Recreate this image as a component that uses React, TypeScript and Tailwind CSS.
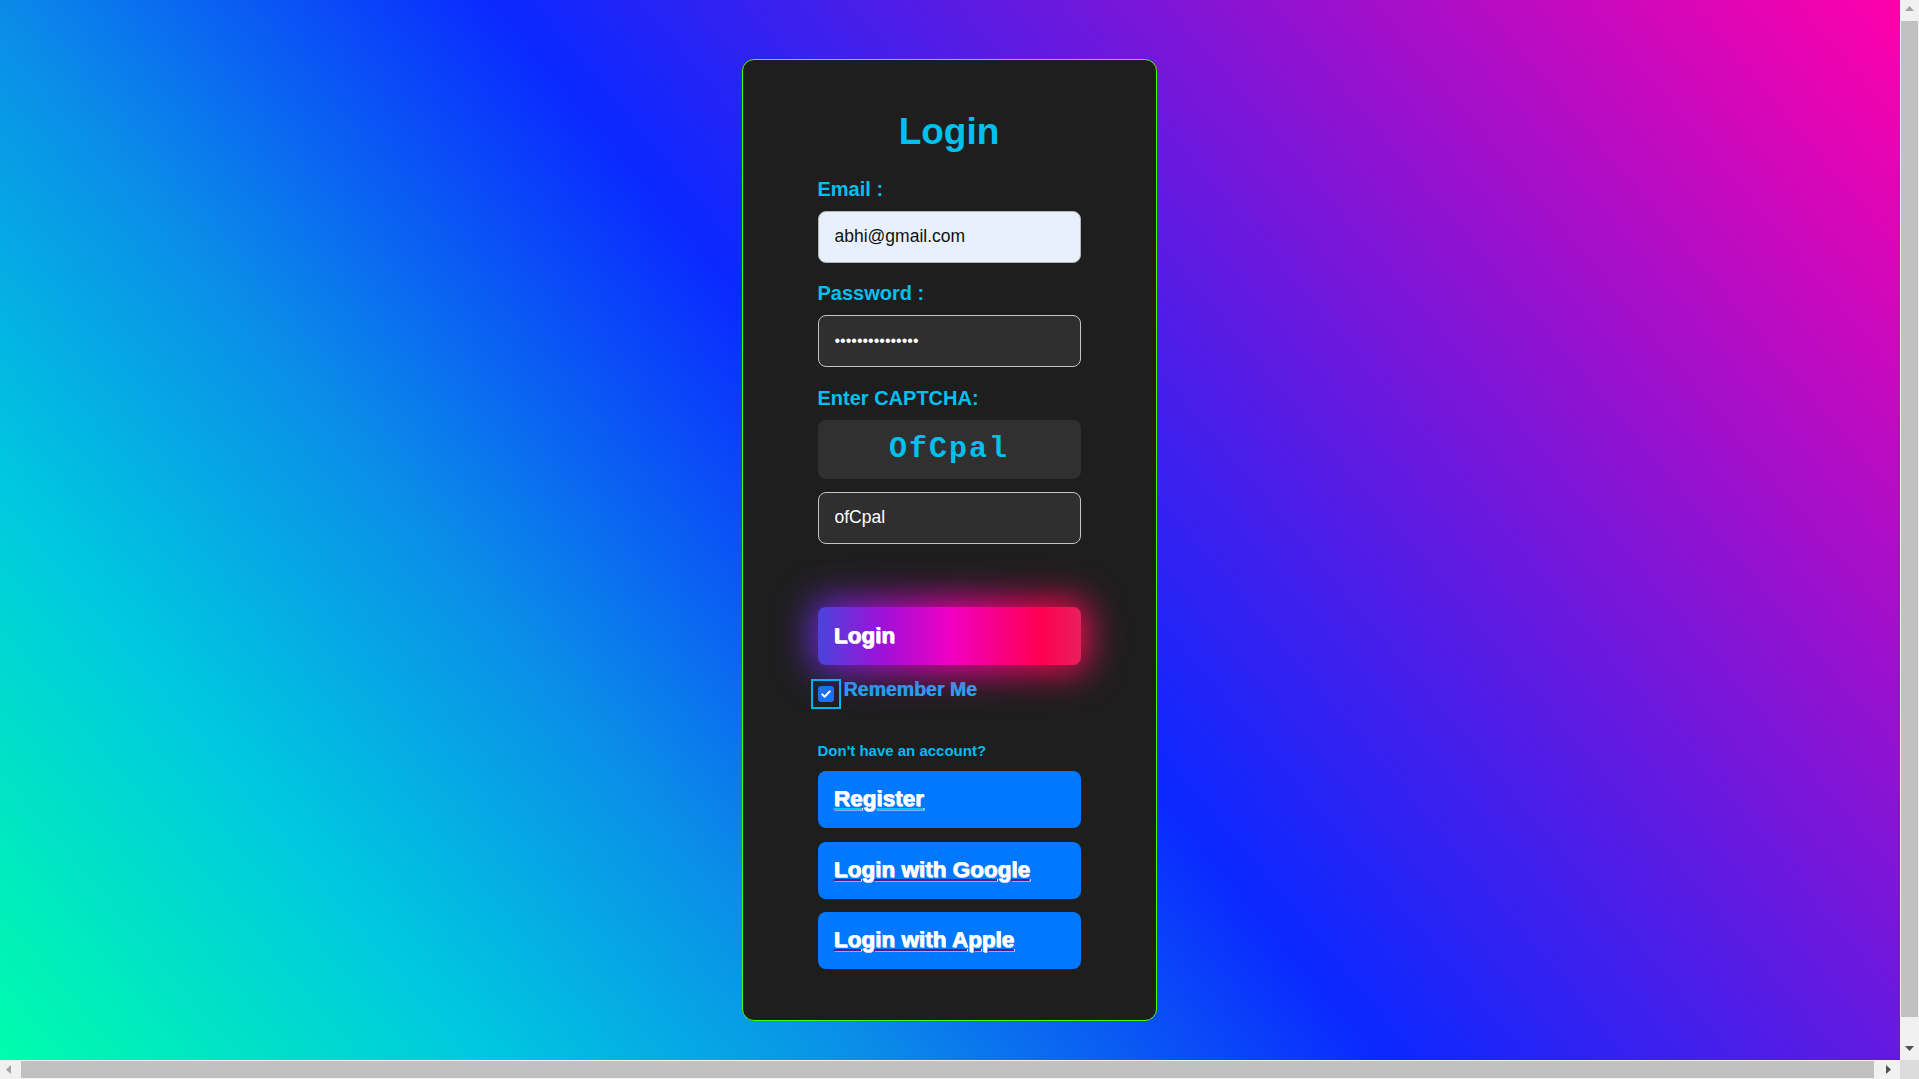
import React from "react";

const sans = "font-['Liberation_Sans',Arial,sans-serif]";

interface LinkButtonProps {
  label: string;
  line: string;
  top: string;
}

const LinkButton = ({ label, line, top }: LinkButtonProps) => {
  return (
    <button
      className={`${top} h-[57px] w-full shrink-0 rounded-lg bg-[#0078ff] pl-4 text-left text-[22.5px] font-bold text-white`}
    >
      <span
        className={`underline decoration-2 underline-offset-[2px] ${line} [text-shadow:0.8px_0_0_#fff,1px_0.6px_0_#d8d2ff]`}
      >
        {label}
      </span>
    </button>
  );
};

// small triangles for the scrollbar arrows
const Arrow = ({ dir, color }: { dir: "up" | "down" | "left" | "right"; color: string }) => {
  const pts = {
    up: "0,5 4.5,0 9,5",
    down: "0,0 9,0 4.5,5",
    left: "5,0 5,9 0,4.5",
    right: "0,0 0,9 5,4.5",
  }[dir];
  const vertical = dir === "up" || dir === "down";
  return (
    <svg
      width={vertical ? 9 : 5}
      height={vertical ? 5 : 9}
      viewBox={vertical ? "0 0 9 5" : "0 0 5 9"}
    >
      <polygon points={pts} fill={color} />
    </svg>
  );
};

const App = () => {
  return (
    <div
      className={`grid h-screen w-screen grid-cols-[1fr_19px] grid-rows-[1fr_19px] overflow-hidden ${sans}`}
    >
      <main className="overflow-hidden">
        <div className="flex h-[1079px] w-full items-center justify-center pr-[2px] bg-[linear-gradient(50deg,#00ffaa_0%,#00c8e0_18%,#0a8ce8_32%,#0a28ff_50%,#ff00aa_100%)]">
          <div className="flex w-[415px] flex-col rounded-xl border border-[#44ff00] bg-[#1e1e1e] px-[75px] pt-[50px] pb-[51px]">
            <h1 className="text-center text-[37px] leading-[44px] font-bold text-[#00c0f0]">
              Login
            </h1>

            <label className="mt-[23px] text-[20px] leading-[24px] font-bold text-[#00c0f0]">
              Email :
            </label>
            <input
              readOnly
              defaultValue="abhi@gmail.com"
              className="mt-[10px] h-[52px] w-full rounded-lg border border-[#b4b4b4] bg-[#e8f0fe] px-4 text-[17.5px] text-[#111] outline-none"
            />

            <label className="mt-[18px] text-[20px] leading-[24px] font-bold text-[#00c0f0]">
              Password :
            </label>
            <input
              readOnly
              type="password"
              defaultValue="abhishek@123456"
              className="mt-[10px] h-[52px] w-full rounded-lg border border-[#c4c4c4] bg-[#2f2f2f] px-4 text-[16px] text-white outline-none"
            />

            <label className="mt-[19px] text-[20px] leading-[24px] font-bold text-[#00c0f0]">
              Enter CAPTCHA:
            </label>
            <div className="mt-[10px] flex h-[59px] w-full items-center justify-center rounded-lg bg-[#303030] font-['Liberation_Mono','Courier_New',monospace] text-[30px] font-bold tracking-[2px] text-[#00c0f0]">
              OfCpal
            </div>
            <input
              readOnly
              defaultValue="ofCpal"
              className="mt-[13px] h-[52px] w-full rounded-lg border border-[#c4c4c4] bg-[#2f2f2f] px-4 text-[17.5px] text-white outline-none"
            />

            <div className="relative isolate mt-[63px] h-[58px] w-full">
              <div className="absolute -inset-[6px] -z-10 rounded-xl bg-[linear-gradient(90deg,#5a30e0,#c008d0_30%,#ff00b8_50%,#ff0050_85%,#ff1060)] blur-[18px]" />
              <button className="relative h-full w-full rounded-lg bg-[linear-gradient(90deg,#4a44dc,#a010d8_25%,#f000c4_50%,#ff0050_85%,#e8205c)] pl-4 text-left text-[22.5px] font-bold text-white [text-shadow:0.8px_0_0_#fff,1px_0.6px_0_#e8dcff]">
                Login
              </button>
            </div>

            <div className="mt-[14px] flex items-start">
              <span className="relative mt-[7px] flex h-4 w-4 shrink-0 items-center justify-center rounded-[3px] bg-[#1a70ee]">
                <span className="absolute -inset-[7px] border-2 border-[#00b4ee]" />
                <svg viewBox="0 0 16 16" className="h-3 w-3">
                  <path
                    d="M3 8.5l3.2 3.2L13 4.5"
                    stroke="white"
                    strokeWidth="2.6"
                    fill="none"
                    strokeLinecap="round"
                    strokeLinejoin="round"
                  />
                </svg>
              </span>
              <span className="ml-[10px] text-[19.5px] leading-[20px] font-bold text-[#14b0ee] [text-shadow:0.5px_0_0_#14b0ee]">
                Remember Me
              </span>
            </div>

            <p className="mt-[40px] text-[15px] leading-[18px] font-bold text-[#00bcf0]">
              Don't have an account?
            </p>
            <LinkButton label="Register" line="decoration-[#00c4f0]" top="mt-[11px]" />
            <LinkButton label="Login with Google" line="decoration-[#551a8b]" top="mt-[14px]" />
            <LinkButton label="Login with Apple" line="decoration-[#551a8b]" top="mt-[13px]" />
          </div>
        </div>
      </main>

      {/* vertical scrollbar */}
      <div className="flex flex-col bg-[#f1f1f1]">
        <div className="flex h-[17px] items-center justify-center">
          <Arrow dir="up" color="#a3a3a3" />
        </div>
        <div className="mx-px mt-[4px] h-[996px] bg-[#c1c1c1]" />
        <div className="flex-1" />
        <div className="flex h-[24px] items-center justify-center">
          <Arrow dir="down" color="#505050" />
        </div>
      </div>

      {/* horizontal scrollbar */}
      <div className="flex bg-[#f1f1f1]">
        <div className="flex w-[17px] items-center justify-center">
          <Arrow dir="left" color="#a3a3a3" />
        </div>
        <div className="my-px ml-[4px] w-[1853px] bg-[#c1c1c1]" />
        <div className="flex-1" />
        <div className="flex w-[24px] items-center justify-center">
          <Arrow dir="right" color="#505050" />
        </div>
      </div>
      <div className="bg-[#dcdcdc]" />
    </div>
  );
};

export default App;
